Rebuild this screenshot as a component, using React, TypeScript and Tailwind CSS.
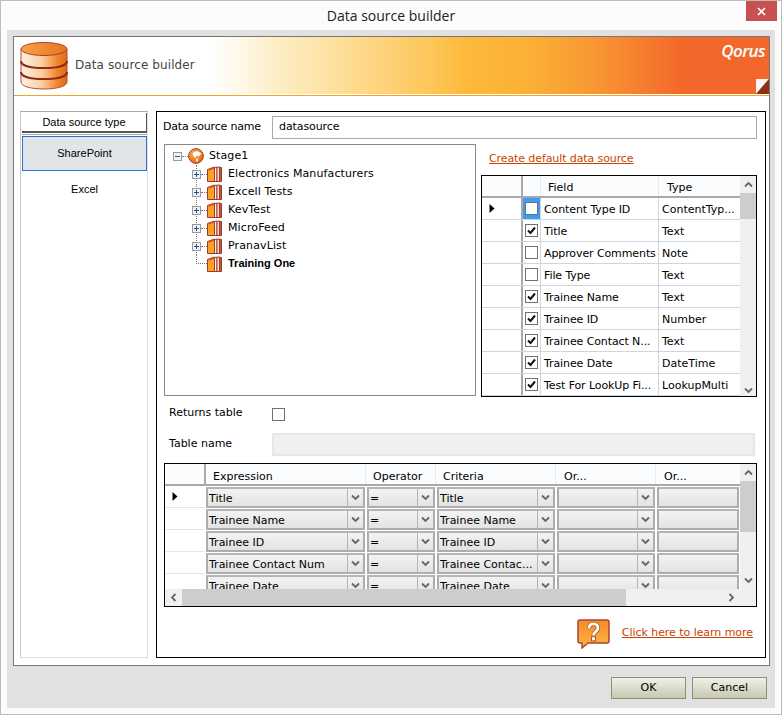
import React from "react";

const mono = "font-['DejaVu_Sans',sans-serif] text-[11px] text-black";

function ChevronDown({ className = "" }: { className?: string }) {
  return (
    <svg width="9" height="7" viewBox="0 0 9 7" className={className}>
      <path d="M1 1.5 L4.5 5 L8 1.5" fill="none" stroke="#666" strokeWidth="1.8" />
    </svg>
  );
}

function ChevronUp() {
  return (
    <svg width="9" height="7" viewBox="0 0 9 7">
      <path d="M1 5.5 L4.5 2 L8 5.5" fill="none" stroke="#666" strokeWidth="1.8" />
    </svg>
  );
}

function ChevronSide({ left = false }: { left?: boolean }) {
  return (
    <svg width="7" height="9" viewBox="0 0 7 9">
      <path d={left ? "M5.5 1 L2 4.5 L5.5 8" : "M1.5 1 L5 4.5 L1.5 8"} fill="none" stroke="#666" strokeWidth="1.8" />
    </svg>
  );
}

function Pointer() {
  return (
    <svg width="6" height="9" viewBox="0 0 6 9">
      <path d="M0.5 0 L5.5 4.5 L0.5 9 Z" fill="#000" />
    </svg>
  );
}

function DbIcon() {
  return (
    <svg width="48" height="48" viewBox="0 0 48 48">
      <defs>
        <linearGradient id="dbBody" x1="0" x2="1" y1="0" y2="0">
          <stop offset="0" stopColor="#fff1e4" />
          <stop offset="0.45" stopColor="#fbcf9f" />
          <stop offset="0.8" stopColor="#f08427" />
          <stop offset="1" stopColor="#e06a1a" />
        </linearGradient>
        <linearGradient id="dbTop" x1="0" x2="1" y1="0" y2="0">
          <stop offset="0" stopColor="#f7a24a" />
          <stop offset="1" stopColor="#e8731c" />
        </linearGradient>
      </defs>
      <path d="M1 7 V40 C1 44 10 47 24 47 C38 47 47 44 47 40 V7 Z" fill="url(#dbBody)" stroke="#b5493a" strokeWidth="1" />
      <path d="M1 19 C1 24 12 26 24 26 C36 26 47 24 47 19" fill="none" stroke="#8d2a1c" strokeWidth="2" />
      <path d="M1 30 C1 35 12 37 24 37 C36 37 47 35 47 30" fill="none" stroke="#8d2a1c" strokeWidth="2" />
      <ellipse cx="24" cy="7" rx="23" ry="6.5" fill="url(#dbTop)" stroke="#a8401f" strokeWidth="1" />
    </svg>
  );
}

function GlobeIcon() {
  return (
    <svg width="16" height="16" viewBox="0 0 16 16" className="shrink-0">
      <defs>
        <radialGradient id="globe" cx="0.4" cy="0.35" r="0.7">
          <stop offset="0" stopColor="#fbb060" />
          <stop offset="0.65" stopColor="#f27f22" />
          <stop offset="1" stopColor="#c9521a" />
        </radialGradient>
      </defs>
      <circle cx="8" cy="8" r="7.4" fill="url(#globe)" stroke="#a9482a" strokeWidth="1" />
      <path d="M4.500 5 L9 3 L13.500 5.500 L10.500 8.500 L8.500 7.500 L7.500 10 L5.500 8 Z" fill="#fff" />
      <path d="M8 11 L10.500 10.500 L9.500 14 L8 13.500 Z" fill="#ffe6cc" />
    </svg>
  );
}

function BooksIcon() {
  return (
    <svg width="15" height="16" viewBox="0 0 15 16" className="shrink-0">
      <path d="M0.500 3.500 L7.500 1 V15.500 H0.500 Z" fill="#fba024" stroke="#a33a26" />
      <path d="M0.500 3.500 L7.500 1 L9 2 L2 4.500 Z" fill="#d9482e" />
      <path d="M7.500 1.500 L10 1 V15.500 H7.500 Z" fill="#fff6ea" stroke="#a33a26" />
      <path d="M10 1.500 L12.500 0.800 V15.500 H10 Z" fill="#f4e6da" stroke="#a33a26" />
      <path d="M12.500 1.500 L14.500 1.500 V15.500 H12.500 Z" fill="#c8553a" stroke="#a33a26" />
    </svg>
  );
}

function Expander({ open = false }: { open?: boolean }) {
  return (
    <span className="flex h-[9px] w-[9px] shrink-0 items-center justify-center border border-[#999] bg-[#f0f2f5]">
      <svg width="7" height="7" viewBox="0 0 7 7">
        <path d={open ? "M1 3.5 H6" : "M1 3.5 H6 M3.5 1 V6"} stroke={open ? "#555" : "#2b4f9e"} strokeWidth="1" />
      </svg>
    </span>
  );
}

function HelpIcon() {
  return (
    <svg width="33" height="30" viewBox="0 0 33 30">
      <defs>
        <linearGradient id="help" x1="0" x2="0" y1="0" y2="1">
          <stop offset="0" stopColor="#f78b2b" />
          <stop offset="1" stopColor="#fdb546" />
        </linearGradient>
      </defs>
      <path
        d="M3 1 H30 C31.500 1 32 2 32 3 V22 C32 23.500 31.500 24 30 24 H11 L5 29 V24 H3 C1.500 24 1 23.500 1 22 V3 C1 2 1.500 1 3 1 Z"
        fill="url(#help)"
        stroke="#a5482c"
        strokeWidth="1.5"
      />
      <path d="M12 9 C12 3.500 21 3.500 21 9 C21 12.500 17 12.500 16.500 16" fill="none" stroke="#a5482c" strokeWidth="4.200" />
      <rect x="14" y="17.300" width="5" height="5" fill="#a5482c" />
      <path d="M12 9 C12 3.500 21 3.500 21 9 C21 12.500 17 12.500 16.500 16" fill="none" stroke="#fff" strokeWidth="2.800" />
      <rect x="14.900" y="18.200" width="3.200" height="3.200" fill="#fff" />
    </svg>
  );
}

function Check({ checked, active = false }: { checked: boolean; active?: boolean }) {
  return (
    <div className={`flex h-full w-[18px] shrink-0 items-center justify-center border-r border-[#ccd6e2] ${active ? "bg-[#3f9cf5]" : ""}`}>
      <span className="flex h-[13px] w-[13px] items-center justify-center border border-[#707070] bg-white">
        {checked && (
          <svg width="11" height="11" viewBox="0 0 11 11">
            <path d="M2 5.500 L4.500 8 L9 2.500" fill="none" stroke="#111" strokeWidth="2" />
          </svg>
        )}
      </span>
    </div>
  );
}

function VScroll({ thumb, arrowPad }: { thumb: string; arrowPad: string }) {
  return (
    <div className="flex w-4 shrink-0 flex-col bg-[#f0f0f0]">
      <div className="flex h-[17px] shrink-0 items-center justify-center">
        <ChevronUp />
      </div>
      <div className={`${thumb} shrink-0 bg-[#cdcdcd]`} />
      <div className={`flex flex-1 items-end justify-center ${arrowPad}`}>
        <ChevronDown />
      </div>
    </div>
  );
}

const fields: [string, string, boolean][] = [
  ["Content Type ID", "ContentTyp...", false],
  ["Title", "Text", true],
  ["Approver Comments", "Note", false],
  ["File Type", "Text", false],
  ["Trainee Name", "Text", true],
  ["Trainee ID", "Number", true],
  ["Trainee Contact N...", "Text", true],
  ["Trainee Date", "DateTime", true],
  ["Test For LookUp Fi...", "LookupMulti", true],
];

function FieldGrid() {
  return (
    <div className={`flex h-[222px] border border-black ${mono}`}>
      <div className="flex w-[258px] shrink-0 flex-col overflow-hidden">
        <div className="flex h-[22px] shrink-0 border-b-2 border-[#a9a9a9] bg-[#fbfcfe] leading-[23px]">
          <div className="w-[41px] shrink-0 border-r-2 border-[#a9a9a9]" />
          <div className="w-[18px] shrink-0 border-r border-[#e3ebf6]" />
          <div className="w-[118px] shrink-0 border-r border-[#e3ebf6] pl-[7px]">Field</div>
          <div className="flex-1 pl-2">Type</div>
        </div>
        {fields.map(([name, type, checked], i) => (
          <div key={name} className="flex h-[22px] shrink-0 border-b border-[#ccd6e2] leading-[23px]">
            <div className="flex w-[41px] shrink-0 items-center border-r-2 border-[#a9a9a9] pl-[7px]">{i === 0 && <Pointer />}</div>
            <Check checked={checked} active={i === 0} />
            <div className="w-[118px] shrink-0 truncate border-r border-[#ccd6e2] pl-[3px] tracking-[-0.1px]">{name}</div>
            <div className="flex-1 pl-[3px]">{type}</div>
          </div>
        ))}
      </div>
      <VScroll thumb="h-[26px]" arrowPad="pb-[2px]" />
    </div>
  );
}

const rules: [string, string, string][] = [
  ["Title", "=", "Title"],
  ["Trainee Name", "=", "Trainee Name"],
  ["Trainee ID", "=", "Trainee ID"],
  ["Trainee Contact Num", "=", "Trainee Contac..."],
  ["Trainee Date", "=", "Trainee Date"],
];

function Combo({ width, text = "", arrow = true }: { width: string; text?: string; arrow?: boolean }) {
  return (
    <div className={`${width} flex h-[21px] shrink-0 border-2 border-[#adadad] border-t-[#b5b5b5] bg-gradient-to-b from-[#f3f3f3] to-[#e3e3e3]`}>
      <div className="min-w-0 flex-1 truncate pl-px leading-[20px]">{text}</div>
      {arrow && (
        <div className="flex w-4 shrink-0 items-center justify-center border-l border-[#b5b5b5]">
          <ChevronDown />
        </div>
      )}
    </div>
  );
}

function ExpressionGrid() {
  return (
    <div className={`flex h-[144px] flex-col border border-black ${mono}`}>
      <div className="flex min-h-0 flex-1">
        <div className="flex w-[575px] shrink-0 flex-col overflow-hidden">
          <div className="flex h-[22px] shrink-0 border-b-2 border-[#a9a9a9] bg-[#fbfcfe] leading-[25px]">
            <div className="w-[41px] shrink-0 border-r-2 border-[#a9a9a9]" />
            <div className="w-[160px] shrink-0 border-r border-[#e3ebf6] pl-[7px]">Expression</div>
            <div className="w-[70px] shrink-0 border-r border-[#e3ebf6] pl-[7px]">Operator</div>
            <div className="w-[120px] shrink-0 border-r border-[#e3ebf6] pl-[7px]">Criteria</div>
            <div className="w-[100px] shrink-0 border-r border-[#e3ebf6] pl-2">Or...</div>
            <div className="flex-1 pl-2">Or...</div>
          </div>
          {rules.map(([expr, op, crit], i) => (
            <div key={expr} className="flex h-[22px] shrink-0 items-end gap-[2px]">
              <div className="flex h-[22px] w-[39px] shrink-0 items-center border-b border-[#dde7f3] pl-[7px]">{i === 0 && <Pointer />}</div>
              <Combo width="w-[159px]" text={expr} />
              <Combo width="w-[68px]" text={op} />
              <Combo width="w-[118px]" text={crit} />
              <Combo width="w-[98px]" />
              <Combo width="w-[82px]" arrow={false} />
            </div>
          ))}
        </div>
        <VScroll thumb="h-[51px]" arrowPad="pb-[5px]" />
      </div>
      <div className="flex h-[17px] shrink-0 bg-[#f0f0f0]">
        <div className="flex w-[17px] shrink-0 items-center justify-center">
          <ChevronSide left />
        </div>
        <div className="w-[444px] shrink-0 bg-[#cdcdcd]" />
        <div className="flex flex-1 items-center justify-end pr-[21px]">
          <ChevronSide />
        </div>
      </div>
    </div>
  );
}

function Tree() {
  const nodes = ["Electronics Manufacturers", "Excell Tests", "KevTest", "MicroFeed", "PranavList"];
  return (
    <div className={`h-[252px] w-[312px] shrink-0 border border-[#8a8a8a] pl-2 pt-[2px] ${mono}`}>
      <div className="flex h-[18px] items-center">
        <Expander open />
        <span className="w-[6px] border-t border-dotted border-[#777]" />
        <GlobeIcon />
        <span className="ml-[5px] tracking-[0.1px]">Stage1</span>
      </div>
      <div className="ml-[23px] w-fit border-l border-dotted border-[#777]">
        {nodes.map((n) => (
          <div key={n} className="-ml-[5px] flex h-[18px] items-center">
            <Expander />
            <span className="w-[6px] border-t border-dotted border-[#777]" />
            <BooksIcon />
            <span className="ml-[6px] tracking-[0.12px]">{n}</span>
          </div>
        ))}
      </div>
      <div className="ml-[23px] flex h-[18px] items-center">
        <span className="-mt-[9px] h-[9px] w-[11px] border-b border-l border-dotted border-[#777]" />
        <BooksIcon />
        <span className="mb-px ml-[6px] font-['Liberation_Sans',sans-serif] font-bold">Training One</span>
      </div>
    </div>
  );
}

export default function App() {
  return (
    <div className={`flex h-[715px] w-[782px] flex-col border border-[#bdbdbd] bg-[#fcfcfc] ${mono}`}>
      {/* title bar */}
      <div className="relative flex h-[29px] shrink-0 items-center justify-center font-['Open_Sans',sans-serif] text-[14px] text-[#222]">
        Data source builder
        <div className="absolute right-[4px] top-0 flex h-5 w-[31px] items-center justify-center bg-[#c75050]">
          <svg width="9" height="9" viewBox="0 0 9 9">
            <path d="M1 1 L8 8 M8 1 L1 8" stroke="#fff" strokeWidth="1.700" />
          </svg>
        </div>
      </div>

      <div className="mx-[6px] flex h-[678px] shrink-0 flex-col bg-[#e1e1e1] px-[6px] pt-[6px]">
        <div className="flex h-[630px] w-[757px] shrink-0 flex-col border border-[#767676] bg-white">
          {/* banner */}
          <div className="h-[59px] shrink-0 border-b border-[#f0a52e] pb-px">
            <div className="relative flex h-full items-center bg-[linear-gradient(90deg,#ffffff_26%,#fff8e8_30%,#fdeec5_35%,#fedd95_44%,#fdc75a_55%,#fdb93b_60%,#fbb235_67.5%,#f99a35_76%,#f3682a_88.5%,#f3682a_100%)] pl-[6px]">
              <DbIcon />
              <span className="mb-px ml-[7px] font-['DejaVu_Sans',sans-serif] text-[12px] tracking-[0.1px] text-[#444]">Data source builder</span>
              <span className="absolute right-[4px] top-[1px] font-['Open_Sans',sans-serif] text-[17px] font-semibold italic tracking-[-0.6px] text-white">
                Qorus
              </span>
              <svg width="13" height="15" viewBox="0 0 13 15" className="absolute bottom-0 right-0">
                <path d="M0 15 V0 H13 Z" fill="#fbf8f4" />
                <path d="M13 0 L0 15 H13 Z" fill="#8f2f1c" />
              </svg>
            </div>
          </div>

          <div className="flex min-h-0 flex-1 gap-2 px-[6px] pb-[7px] pt-[15px]">
            {/* source type list */}
            <div className="flex w-[128px] shrink-0 flex-col border border-[#e0e0e0] border-l-[#c8c8c8] border-t-[#a8a8a8] pl-px pt-px font-['Liberation_Sans',sans-serif] text-[11px]">
              <div className="h-[20px] border-b-2 border-r border-[#555] text-center leading-[19px]">Data source type</div>
              <div className="mt-px h-px bg-[#aaa]" />
              <div className="mt-[1px] flex h-[35px] items-center justify-center border border-[#2f6fd0] bg-[#e1e5e7]">SharePoint</div>
              <div className="flex h-[36px] items-center justify-center">Excel</div>
            </div>

            {/* main panel */}
            <div className="flex w-[610px] shrink-0 flex-col border border-black px-[7px] pt-1">
              <div className="flex h-[23px] shrink-0 items-center justify-between pr-px">
                <span className="-ml-px tracking-[-0.2px]">Data source name</span>
                <div className="flex h-[23px] w-[485px] items-center border border-[#aaa] pl-[6px] tracking-[-0.1px]">datasource</div>
              </div>

              <div className="mt-[5px] flex shrink-0 justify-between pr-px">
                <Tree />
                <div className="flex w-[276px] shrink-0 flex-col">
                  <div className="flex h-[31px] items-center pl-2 tracking-[-0.1px] text-[#c64500] underline">Create default data source</div>
                  <FieldGrid />
                </div>
              </div>

              <div className="mt-2 flex h-[18px] shrink-0 items-center pl-[5px]">
                <span className="w-[103px] pb-px">Returns table</span>
                <span className="h-[13px] w-[13px] border border-[#707070] bg-white" />
              </div>
              <div className="mt-[10px] flex h-[23px] shrink-0 items-center pl-[5px]">
                <span className="w-[103px] pb-px">Table name</span>
                <div className="h-[23px] w-[483px] border-2 border-[#e6e6e6] bg-[#f0f0f0]" />
              </div>

              <div className="mt-[7px] w-[593px] shrink-0">
                <ExpressionGrid />
              </div>

              <div className="mt-3 flex items-center justify-end pr-[5px]">
                <HelpIcon />
                <span className="mb-[2px] ml-[12px] tracking-[-0.05px] text-[#c64500] underline">Click here to learn more</span>
              </div>
            </div>
          </div>
        </div>

        {/* footer */}
        <div className="mt-[11px] flex justify-end gap-[6px] pr-[2px]">
          <button className="h-[22px] w-[75px] border border-[#8f8f73] bg-gradient-to-b from-[#f0f0e8] to-[#c8c8b4] text-[11px]">OK</button>
          <button className="h-[22px] w-[75px] border border-[#8f8f73] bg-gradient-to-b from-[#f0f0e8] to-[#c8c8b4] text-[11px]">Cancel</button>
        </div>
      </div>
    </div>
  );
}
